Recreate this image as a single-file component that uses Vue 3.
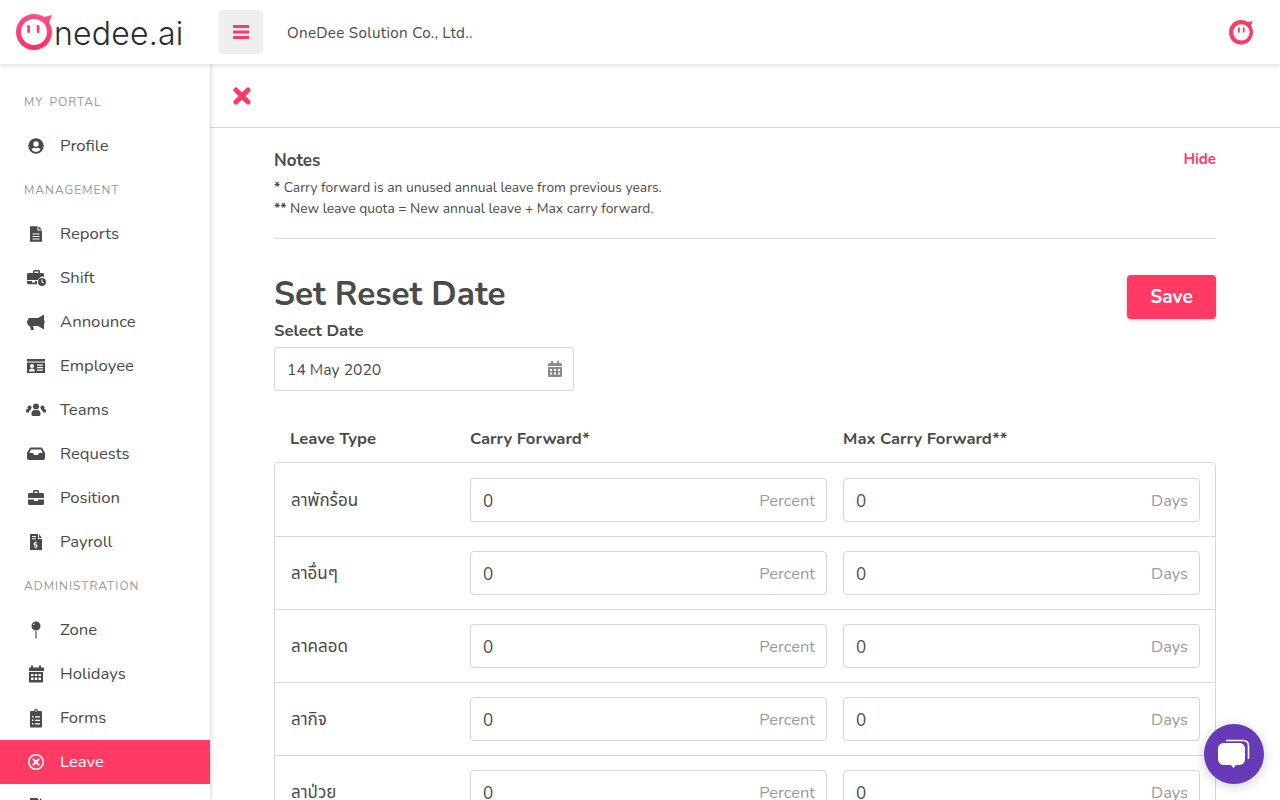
<template>
  <div class="app">
    <header class="topbar">
      <div class="logo">
        <svg class="logo-face" viewBox="0 0 38 38" width="38" height="38">
          <defs>
            <linearGradient id="ring" x1="0" y1="0" x2="0" y2="1">
              <stop offset="0" stop-color="#ff4f8a" />
              <stop offset="1" stop-color="#ff2f68" />
            </linearGradient>
          </defs>
          <path d="M19 1c4 0 7 1 10 3l8-2-3 7.500c2 2.800 3 5.800 3 9.500 0 9.900-8 18-18 18S1 28.900 1 19 9.100 1 19 1z" fill="url(#ring)" />
          <circle cx="19" cy="19" r="13" fill="#fff" />
          <rect x="12.300" y="12" width="2.600" height="8" rx="1.300" fill="#ff3a65" />
          <rect x="21.800" y="12" width="2.600" height="8" rx="1.300" fill="#ff3a65" />
        </svg>
        <span class="logo-text">nedee.ai</span>
      </div>
      <button class="burger">
        <svg viewBox="0 0 16 14" width="16" height="14"><path d="M0 1.500h16M0 7h16M0 12.500h16" stroke="#ff3a65" stroke-width="3" /></svg>
      </button>
      <span class="company">OneDee Solution Co., Ltd..</span>
      <svg class="avatar" viewBox="0 0 38 38" width="26" height="26">
        <path d="M19 1.500c4 0 7 1 10 3l7-1.500-2.500 7c2 2.800 3 5.800 3 9.500 0 9.900-7.700 18-17.500 18S1.500 29.400 1.500 19.500 9.100 1.500 19 1.500z" fill="#ff3a65" />
        <circle cx="19.500" cy="19.500" r="12" fill="#fff" />
        <rect x="14.700" y="12" width="2.600" height="8" rx="1.300" fill="#ff3a65" />
        <rect x="21.700" y="12" width="2.600" height="8" rx="1.300" fill="#ff3a65" />
      </svg>
    </header>

    <div class="body">
      <aside class="sidebar">
        <template v-for="item in menu" :key="item.label">
          <div v-if="item.section" class="section">{{ item.label }}</div>
          <div v-else class="item" :class="{ active: item.active }">
            <svg class="icon" viewBox="0 0 20 20" width="20" height="20" v-html="item.icon"></svg>
            <span>{{ item.label }}</span>
          </div>
        </template>
      </aside>

      <main class="main">
        <div class="closebar">
          <svg viewBox="0 0 18 18" width="18" height="18"><path d="M3 3l12 12M15 3L3 15" stroke="#ff3a65" stroke-width="5" stroke-linecap="round" /></svg>
        </div>
        <div class="content">
          <section class="notes">
            <div class="notes-head">
              <h4>Notes</h4>
              <a class="hide">Hide</a>
            </div>
            <p><b>*</b> Carry forward is an unused annual leave from previous years.</p>
            <p><b>**</b> New leave quota = New annual leave + Max carry forward.</p>
          </section>

          <div class="reset-head">
            <h1>Set Reset Date</h1>
            <button class="save">Save</button>
          </div>
          <label class="date-label">Select Date</label>
          <div class="field date">
            <span class="value">14 May 2020</span>
            <svg viewBox="0 0 14 16" width="14" height="16">
              <path fill="#8a8a8a" d="M3 0h2v2h4V0h2v2h1.500A1.500 1.500 0 0 1 14 3.500V5H0V3.500A1.500 1.500 0 0 1 1.500 2H3zM0 6h14v8.500a1.500 1.500 0 0 1-1.500 1.500h-11A1.500 1.500 0 0 1 0 14.500zm2 2v2h2V8zm4 0v2h2V8zm4 0v2h2V8zm-8 3.500v2h2v-2zm4 0v2h2v-2zm4 0v2h2v-2z" />
            </svg>
          </div>

          <div class="table-head">
            <span>Leave Type</span>
            <span>Carry Forward*</span>
            <span>Max Carry Forward**</span>
          </div>
          <div class="table">
            <div v-for="row in leaves" :key="row" class="row">
              <span class="leave-name">{{ row }}</span>
              <div class="field"><span class="value">0</span><span class="unit">Percent</span></div>
              <div class="field"><span class="value">0</span><span class="unit">Days</span></div>
            </div>
          </div>
        </div>
      </main>
    </div>

    <button class="chat">
      <svg viewBox="0 0 32 32" width="32" height="32">
        <path d="M8 2.500h17c3.500 0 5.500 2 5.500 5.500v13" fill="none" stroke="#fff" stroke-width="1.600" />
        <path d="M6 5h15c4 0 6 2.500 6 6v10c0 3.500-2 6-6 6h-3l-2.500 3-2.500-3H6c-3.500 0-6-2.500-6-6V11c0-3.500 2.500-6 6-6z" fill="#fff" />
      </svg>
    </button>
  </div>
</template>

<script setup>
const menu = [
  { section: true, label: "MY PORTAL" },
  { label: "Profile", icon: '<path fill-rule="evenodd" d="M10 2.300a7.700 7.700 0 1 0 0 15.400 7.700 7.700 0 0 0 0-15.400zm0 3a2.700 2.700 0 1 1 0 5.400 2.700 2.700 0 0 1 0-5.400zm0 10.600a6 6 0 0 1-4.500-2.100c.6-1.200 1.700-2 3-2 .5 0 .9.300 1.500.3s1-.3 1.500-.3c1.300 0 2.400.8 3 2a6 6 0 0 1-4.500 2.100z"/>' },
  { section: true, label: "MANAGEMENT" },
  { label: "Reports", icon: '<path fill-rule="evenodd" d="M4 2.300h7.500v4.200H16v11.200H4zM12.500 2.300 16 5.500h-3.500zM6.500 9.500v1h7v-1zm0 2.500v1h7v-1zm0 2.500v1h7v-1z"/>' },
  { label: "Shift", icon: '<path d="M7 5V3.500C7 2.700 7.700 2 8.500 2h4c.8 0 1.500.7 1.500 1.500V5h2.500C17.300 5 18 5.700 18 6.500v2.200a5 5 0 0 0-6 3.300H1V6.500C1 5.700 1.700 5 2.500 5zm1.500-1.500V5h4V3.500zM1 13h5v1.500h3V13h2v1c0 .8.100 1.500.5 2.200h-9C1.700 16.200 1 15.500 1 14.700z"/><path fill-rule="evenodd" d="M16 10a4 4 0 1 0 0 8 4 4 0 0 0 0-8zm-.5 1.500h1v2.300l1.500.9-.5.8-2-1.200z"/>' },
  { label: "Announce", icon: '<path d="M18 2.500 12 6H3.500C2.700 6 2 6.700 2 7.500v1H1v3h1v1c0 .8.700 1.500 1.500 1.500H4l.9 4h3L7 14h5l6 3.500zM19 8.500v3h-.5v-3z"/>' },
  { label: "Employee", icon: '<path fill-rule="evenodd" d="M1 3h18v2.500H1zM1 6.500h18v10.500H1zm5 1.500a2 2 0 1 0 0 4 2 2 0 0 0 0-4zm-3 7.500h6c0-1.700-1.200-3-3-3s-3 1.300-3 3zM11 8.500v1.200h6V8.500zm0 2.500v1.200h6V11zm0 2.500v1.200h6v-1.200z"/>' },
  { label: "Teams", icon: '<circle cx="10" cy="6.500" r="3"/><circle cx="3.500" cy="7.500" r="2"/><circle cx="16.500" cy="7.500" r="2"/><path d="M5.500 13.500c0-2 1.500-3.500 3-3.500.5 0 1 .3 1.500.3s1-.3 1.500-.3c1.500 0 3 1.500 3 3.500v1c0 .8-.7 1.500-1.500 1.500H7c-.8 0-1.500-.7-1.500-1.500zM0 10.500c0-.8.700-1.500 1.500-1.500H4c.4 0 .8.200 1 .4-1.200.7-2 1.900-2.200 3.100H1c-.6 0-1-.4-1-1zM20 10.500c0-.8-.7-1.500-1.500-1.500H16c-.4 0-.8.200-1 .4 1.200.7 2 1.900 2.200 3.100H19c.6 0 1-.4 1-1z"/>' },
  { label: "Requests", icon: '<path fill-rule="evenodd" d="M5 3.500h10c.6 0 1.100.3 1.400.8L19 9v5c0 1.100-.9 2-2 2H3c-1.100 0-2-.9-2-2V9l2.600-4.700C3.900 3.800 4.400 3.500 5 3.500zm0 2L3.300 9H7l1 2h4l1-2h3.700L15 5.500z"/>' },
  { label: "Position", icon: '<path fill-rule="evenodd" d="M7 5V3.500C7 2.700 7.700 2 8.500 2h3c.8 0 1.500.7 1.500 1.500V5h3.500c.8 0 1.500.7 1.500 1.500V10H2V6.500C2 5.700 2.700 5 3.500 5zm1.500-1.500V5h3V3.500zM2 11.500h6V13h4v-1.500h6v4c0 .8-.7 1.500-1.500 1.500h-13C2.700 17 2 16.300 2 15.500z"/>' },
  { label: "Payroll", icon: '<path fill-rule="evenodd" d="M4 2h8v5h4v11H4zM13 2l3 4h-3zM6 4v1h4V4zm0 2.200v1h4v-1zm4 3.300h-.8v.8c-1 .2-1.600.8-1.600 1.700 0 1 .8 1.400 1.700 1.600.8.200 1 .3 1 .6s-.3.500-.9.500c-.5 0-1.100-.2-1.500-.5l-.4.800c.4.300 1 .5 1.700.6v.9h.8v-.9c1-.2 1.600-.8 1.600-1.600 0-1-.8-1.500-1.700-1.700-.8-.2-1-.3-1-.6 0-.2.300-.4.800-.4.400 0 .9.100 1.200.3l.4-.8c-.4-.2-.8-.4-1.300-.5z"/>' },
  { section: true, label: "ADMINISTRATION" },
  { label: "Zone", icon: '<path fill-rule="evenodd" d="M10 1.500a4.500 4.500 0 1 1 0 9 4.500 4.500 0 0 1 0-9zM8.500 3.500a1.500 1.500 0 0 0-1.500 1.500h1c0-.3.200-.5.500-.5zM9.400 11.300h1.200v7.200H9.400z"/>' },
  { label: "Holidays", icon: '<path fill-rule="evenodd" d="M5 1.500h2v2h6v-2h2v2h2c.6 0 1 .4 1 1V7H3V4.500c0-.6.400-1 1-1h1zM3 8h14v9.500c0 .6-.4 1-1 1H4c-.6 0-1-.4-1-1zm2 2v2h2.500v-2zm3.800 0v2h2.400v-2zm3.700 0v2H15v-2zM5 13.500v2.500h2.500v-2.500zm3.800 0v2.500h2.400v-2.500zm3.700 0v2.500H15v-2.500z"/>' },
  { label: "Forms", icon: '<path fill-rule="evenodd" d="M8 3a2 2 0 0 1 4 0h3c.8 0 1 .7 1 1.500V18c0 .8-.2 1.500-1 1.500H5c-.8 0-1-.7-1-1.500V4.500C4 3.700 4.200 3 5 3zm2-.7a.8.8 0 1 0 0 1.600.8.800 0 0 0 0-1.600zM6 8v1.500h1.500V8zm3 .2v1.200h5V8.200zM6 11.500V13h1.500v-1.500zm3 .2v1.200h5v-1.200zM6 15v1.500h1.500V15zm3 .2v1.200h5v-1.200z"/>' },
  { label: "Leave", active: true, icon: '<path fill-rule="evenodd" d="M10 2a8 8 0 1 0 0 16 8 8 0 0 0 0-16zm0 1.500a6.500 6.500 0 1 1 0 13 6.500 6.500 0 0 1 0-13z"/><path d="M7.500 7.500l5 5M12.500 7.500l-5 5" stroke="#fff" stroke-width="2" stroke-linecap="round"/>' },
  { label: "Form list", icon: '<path d="M4 2h7l2 2v14H4z"/><path d="M14 2l2 2h-2z"/>' },
];

const leaves = ["ลาพักร้อน", "ลาอื่นๆ", "ลาคลอด", "ลากิจ", "ลาป่วย"];
</script>

<style>
html,
body {
  margin: 0;
  height: 100%;
  overflow: hidden;
  background: #fff;
}
</style>

<style scoped>
.app {
  height: 800px;
  overflow: hidden;
  font-family: "Nunito", "Lato", "Noto Sans", "Noto Sans Thai", sans-serif;
  color: #4a4a4a;
  position: relative;
}

.topbar {
  height: 64px;
  display: flex;
  align-items: center;
  padding: 0 26px 0 15px;
  background: #fff;
  box-shadow: 0 1px 6px rgba(0, 0, 0, 0.16);
  position: relative;
  z-index: 2;
}

.logo {
  width: 204px;
  display: flex;
  align-items: center;
}

.logo-text {
  font-family: "Inter", sans-serif;
  font-weight: 350;
  font-size: 32px;
  letter-spacing: 0.2px;
  color: #2b2b2b;
  margin-left: 1px;
  padding-top: 2px;
}

.burger {
  width: 44px;
  height: 44px;
  border: 0;
  border-radius: 4px;
  background: #efefef;
  display: flex;
  align-items: center;
  justify-content: center;
  padding: 0;
}

.company {
  margin-left: 24px;
  padding-top: 2px;
  font-size: 15.2px;
  letter-spacing: 0.3px;
}

.avatar {
  margin-left: auto;
}

.body {
  display: flex;
  height: 736px;
}

.sidebar {
  width: 210px;
  flex: none;
  padding-top: 16px;
  background: #fff;
  box-shadow: 1px 0 4px rgba(0, 0, 0, 0.16);
  position: relative;
  z-index: 1;
  overflow: hidden;
}

.section {
  height: 44px;
  line-height: 44px;
  padding-left: 24px;
  font-size: 12px;
  letter-spacing: 1px;
  word-spacing: 2px;
  color: #9a9a9a;
}

.item {
  height: 44px;
  display: flex;
  align-items: center;
  padding-left: 26px;
  font-size: 16.7px;
  color: #4a4a4a;
}

.item span {
  margin-top: -1px;
}

.item .icon {
  fill: #4a4a4a;
  margin-right: 14px;
  flex: none;
}

.item.active {
  background: #ff3a65;
  color: #fff;
}

.item.active .icon {
  fill: #fff;
}

.main {
  flex: 1;
  min-width: 0;
}

.closebar {
  height: 63px;
  border-bottom: 1px solid #d8d8d8;
  display: flex;
  align-items: center;
  padding-left: 23px;
}

.content {
  padding: 0 64px;
}

.notes {
  padding: 22px 0 19px;
  border-bottom: 1px solid #d8d8d8;
}

.notes-head {
  display: flex;
  justify-content: space-between;
  margin-bottom: 6px;
}

.notes h4 {
  margin: 0;
  font-size: 17px;
  line-height: 21px;
  font-weight: 700;
}

.hide {
  color: #ff3a65;
  font-size: 15px;
  line-height: 19px;
  font-weight: 700;
}

.notes p {
  margin: 0;
  font-size: 13.8px;
  line-height: 21px;
}

.reset-head {
  display: flex;
  justify-content: space-between;
  align-items: flex-start;
  margin-top: 36px;
}

h1 {
  margin: 0;
  font-size: 33.3px;
  line-height: 38px;
  font-weight: 700;
}

.save {
  width: 89px;
  height: 44px;
  border: 0;
  border-radius: 4px;
  background: #ff3a65;
  color: #fff;
  font-family: inherit;
  font-size: 19px;
  font-weight: 700;
  box-shadow: 0 1px 4px rgba(0, 0, 0, 0.2);
}

.date-label {
  display: block;
  padding-top: 1px;
  font-size: 16.6px;
  line-height: 21px;
  font-weight: 700;
}

.field {
  box-sizing: border-box;
  height: 44px;
  border: 1px solid #d5d5d5;
  border-radius: 4px;
  display: flex;
  align-items: center;
  justify-content: space-between;
  padding: 0 11px 0 12px;
  background: #fff;
}

.date {
  width: 300px;
  margin-top: 6px;
}

.value {
  padding-top: 2px;
  font-size: 15.7px;
}

.unit {
  font-size: 16.4px;
  color: #9a9a9a;
}

.table-head {
  display: grid;
  grid-template-columns: 180px 373px 1fr;
  padding: 37px 16px 12px;
  font-size: 16.6px;
  line-height: 22px;
  font-weight: 700;
}

.table {
  border: 1px solid #d8d8d8;
  border-radius: 4px 4px 0 0;
}

.row {
  display: grid;
  grid-template-columns: 180px 357px 373px;
  align-items: center;
  padding: 14px 15px;
  border-bottom: 1px solid #d8d8d8;
}

.row:first-child {
  padding-top: 15px;
}

.row .field + .field {
  margin-left: 16px;
}

.row .value {
  font-size: 17px;
}

.leave-name {
  padding: 2px 0 0 1px;
  font-size: 17px;
  font-family: "Noto Sans Thai", "Noto Sans", sans-serif;
}

.chat {
  position: absolute;
  right: 16px;
  bottom: 16px;
  width: 60px;
  height: 60px;
  border: 0;
  border-radius: 50%;
  background: #673ab7;
  box-shadow: 0 2px 12px rgba(0, 0, 0, 0.2);
  display: flex;
  align-items: center;
  justify-content: center;
  padding: 0;
  z-index: 3;
}
</style>
